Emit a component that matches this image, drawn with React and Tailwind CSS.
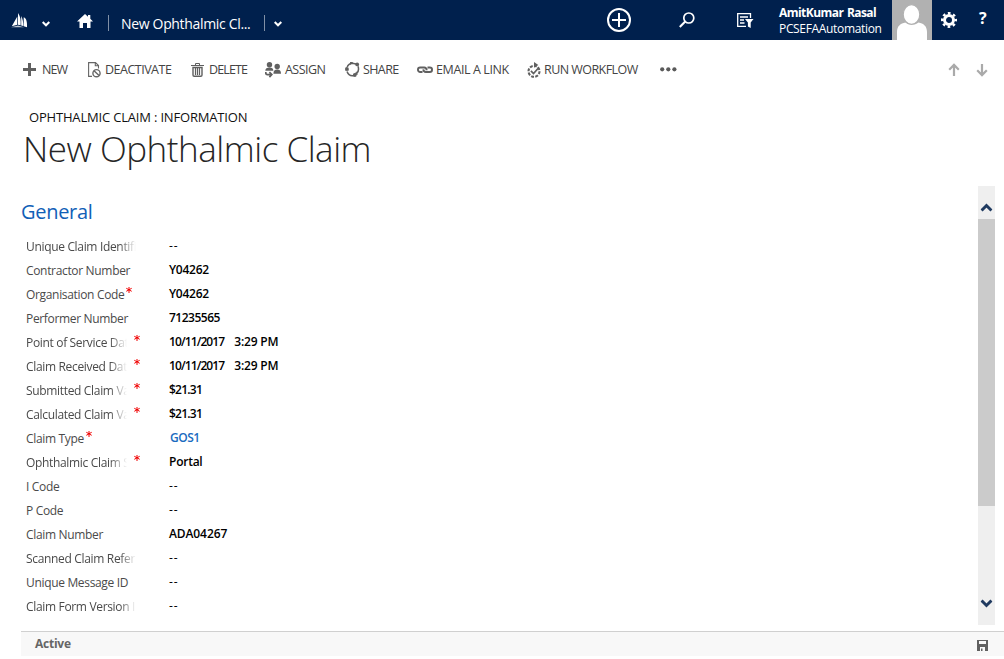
import React from "react";

const fields = [
  { label: "Unique Claim Identifi", fade: true, value: "--" },
  { label: "Contractor Number", value: "Y04262" },
  { label: "Organisation Code", required: true, value: "Y04262" },
  { label: "Performer Number", value: "71235565" },
  { label: "Point of Service Dat", fade: true, required: true, value: "10/11/2017", time: "3:29 PM" },
  { label: "Claim Received Dat", fade: true, required: true, value: "10/11/2017", time: "3:29 PM" },
  { label: "Submitted Claim Va", fade: true, required: true, value: "$21.31" },
  { label: "Calculated Claim Va", fade: true, required: true, value: "$21.31" },
  { label: "Claim Type", required: true, value: "GOS1", link: true },
  { label: "Ophthalmic Claim S", fade: true, required: true, value: "Portal" },
  { label: "I Code", value: "--" },
  { label: "P Code", value: "--" },
  { label: "Claim Number", value: "ADA04267" },
  { label: "Scanned Claim Refer", fade: true, value: "--" },
  { label: "Unique Message ID", value: "--" },
  { label: "Claim Form Version I", fade: true, value: "--" },
];

function Chevron({ className }) {
  return (
    <svg viewBox="0 0 8 6" className={className} fill="none" stroke="currentColor" strokeWidth="2">
      <path d="M0.7 1 4 4.3 7.3 1" />
    </svg>
  );
}

function Asterisk() {
  return (
    <svg viewBox="0 0 6 6" className="mt-1 h-1.5 w-1.5 shrink-0" stroke="#f00000" strokeWidth="1">
      <path d="M3 0v6M0.3 1.3l5.4 3M5.7 1.3l-5.4 3" />
    </svg>
  );
}

const icons = {
  plus: (
    <svg viewBox="0 0 13 13" className="h-[13px] w-[13px]" fill="#5f5f5f">
      <path d="M5 0h3v5h5v3H8v5H5V8H0V5h5z" />
    </svg>
  ),
  deactivate: (
    <svg viewBox="0 0 13 16" className="h-4 w-[13px]" fill="none" stroke="#666" strokeWidth="1.1">
      <path d="M4 14.4H.6V.6h6.9l3 3v3M7.3.6v3.2h3.2" />
      <circle cx="8.5" cy="11.2" r="3.6" strokeWidth="1.4" />
      <path d="m6 8.8 5 4.8" strokeWidth="1.4" />
    </svg>
  ),
  trash: (
    <svg viewBox="0 0 13 14" className="h-[14px] w-[13px]" fill="none" stroke="#5f5f5f">
      <path d="M0 2.5h13M4.5 2.5v-2h4v2" />
      <path d="M2 4.5V12q0 1.3 1.2 1.3h6.6q1.2 0 1.2-1.3V4.5z" strokeWidth="1.4" />
      <path d="M4.5 5v7M6.5 5v7M8.5 5v7" strokeWidth="1.2" />
    </svg>
  ),
  assign: (
    <svg viewBox="0 0 16 16" className="h-4 w-4" fill="#606060">
      <circle cx="4.5" cy="2.7" r="2.7" />
      <path d="M.3 8.7C.3 6.4 2 5.6 4.5 5.6s3.8.8 3.8 3.1z" />
      <circle cx="12.2" cy="4.5" r="2.7" />
      <path d="M8.4 11.7c0-3 1.3-4.3 3.8-4.3s3.8 1.2 3.8 4.3z" />
      <path d="M.8 10v1.1q0 1.5 1.5 1.5h3.2M4.4 10.2l2.4 2.4-2.4 2.5" fill="none" stroke="#606060" strokeWidth="1.7" />
    </svg>
  ),
  share: (
    <svg viewBox="0 0 15 15" className="h-[15px] w-[15px]" fill="#606060">
      <g fill="none" stroke="#606060" strokeWidth="1.5">
        <path d="M2.2 5C3 2.7 4.8 1.3 7.5 1.2L11 2" />
        <path d="M13 4.3c1 2.8.5 5.4-1.4 7.2" />
        <path d="M9 13.5C5.8 14.2 3.2 12.7 2 9.5" />
      </g>
      <path d="M5 .1h3.2L5.3 3.3zM12.8 12.7l-3.3.2 1.7-3.6zM.3 8.7l1-3.2 2.8 2.7z" />
      <circle cx="12.2" cy="2.4" r="1.9" />
      <circle cx="9.8" cy="13" r="1.9" />
      <circle cx="1.9" cy="6.9" r="1.9" />
    </svg>
  ),
  link: (
    <svg viewBox="0 0 16 8" className="h-2 w-4" fill="none" stroke="#606060" strokeWidth="1.9">
      <path d="M5.5 6H3.2a2.2 2.2 0 0 1 0-4.500h4q2.300 0 2.500 2.700M10.500 1.500h2.300a2.200 2.200 0 0 1 0 4.500H8.800Q6.500 6 6.300 3.400" />
    </svg>
  ),
  workflow: (
    <svg viewBox="0 0 14 16" className="h-4 w-[14px]" fill="none" stroke="#606060">
      <circle cx="7" cy="9.3" r="5.5" strokeWidth="2.1" strokeDasharray="2.9 1.3" />
      <path d="m3.9 8.8 2.6 2.7 5.2-5.8" strokeWidth="1.7" />
      <path d="M7 0l4.3 3L7 5.7z" fill="#606060" stroke="none" />
    </svg>
  ),
};

const commands = [
  { icon: "plus", text: "NEW", box: "w-[65px]", gap: "gap-1.5", track: "tracking-[-0.9px]" },
  { icon: "deactivate", text: "DEACTIVATE", box: "w-[103px]", gap: "gap-1", track: "tracking-[-0.5px]" },
  { icon: "trash", text: "DELETE", box: "w-[74px]", gap: "gap-[5px]", track: "tracking-[-0.85px]" },
  { icon: "assign", text: "ASSIGN", box: "w-20", gap: "gap-1", track: "tracking-[-0.55px]" },
  { icon: "share", text: "SHARE", box: "w-[72px]", gap: "gap-[3px]", track: "tracking-[-0.6px]" },
  { icon: "link", text: "EMAIL A LINK", box: "w-[110px]", gap: "gap-[3px]", track: "tracking-[-0.4px]" },
  { icon: "workflow", text: "RUN WORKFLOW", box: "w-[133px]", gap: "gap-[3px]", track: "tracking-[-0.55px]" },
];

function TopBar() {
  return (
    <header className="flex h-10 shrink-0 bg-[#00204d] text-white">
      <div className="flex w-[300px] shrink-0 items-center">
        <svg viewBox="0 0 17 15" className="ml-[11px] h-[15px] w-[17px] shrink-0 fill-white">
          <path d="M6.3 3.5V11.7L.8 13.3zM7 0C9.500 3.500 10 8 9.600 12.200L7 11.700zM10.200 3c1.500 3 2.200 6.500 2.100 10l-2.100-.6zM12.700 4.300c2.800 1 3.600 5 3.300 10L12.700 13.200z" />
          <path d="M0 14.300 7 12.600l6 1.700z" opacity="0.75" />
        </svg>
        <Chevron className="mt-2 ml-[14px] h-1.5 w-2 shrink-0" />
        <svg viewBox="0 0 16 14" className="ml-[27px] h-[14px] w-4 shrink-0 translate-y-px fill-white">
          <path d="M8 0l3 2.7V1h2.3v3.7L16 7.5h-2.5V14H10V9H6v5H2.5V7.5H0z" />
        </svg>
        <div className="mt-1.5 ml-[15px] h-4 w-px shrink-0 bg-[#8090a6]" />
        <span className="mt-2 ml-3 w-[143px] shrink-0 text-[14px] leading-5 tracking-[-0.33px] whitespace-nowrap">New Ophthalmic Cl...</span>
        <div className="mt-1.5 h-4 w-px shrink-0 bg-[#8090a6]" />
        <Chevron className="mt-2 ml-[9px] h-1.5 w-2 shrink-0" />
      </div>
      <div className="flex flex-1 items-center justify-end">
        <svg viewBox="0 0 24 24" className="h-6 w-6 fill-none stroke-white" strokeWidth="2">
          <circle cx="12" cy="12" r="11" />
          <path d="M12 5v14M5 12h14" />
        </svg>
        <svg viewBox="0 0 16 16" className="ml-12 h-4 w-4 fill-none stroke-white" strokeWidth="1.7">
          <circle cx="9.8" cy="6" r="5" />
          <path d="M6.2 9.6.8 15" strokeWidth="2.1" />
        </svg>
        <svg viewBox="0 0 17 15" className="ml-[42px] h-[15px] w-[17px] fill-none stroke-white" strokeWidth="1.3">
          <path d="M13.5 5V.7H.7v12.6H9M3 4h8M3 7h4M3 10h4.5" />
          <path d="M8 6h8.5L13.7 9.5V15l-2.8-1.5v-4z" fill="white" stroke="none" />
        </svg>
        <div className="ml-[25px] flex h-10 w-[113px] flex-col whitespace-nowrap">
          <span className="mt-[5px] text-[12px] leading-4 font-bold tracking-[-0.55px] [word-spacing:1px]">AmitKumar Rasal</span>
          <span className="text-[12px] leading-4 tracking-[-0.33px]">PCSEFAAutomation</span>
        </div>
        <svg viewBox="0 0 40 40" className="h-10 w-10 shrink-0 bg-[#b1b1b1] fill-white">
          <path d="M5 40v-8c0-6 3.5-8.5 8.5-9.5 4 3 9 3 13 0C31.5 23.5 35 26 35 32v8z" />
          <ellipse cx="19.5" cy="14.5" rx="8.3" ry="9.9" stroke="#b1b1b1" strokeWidth="1.2" />
        </svg>
        <svg viewBox="0 0 16 16" className="ml-[9px] h-4 w-4 fill-none stroke-white">
          <circle cx="8" cy="8" r="4.5" strokeWidth="3" />
          <circle cx="8" cy="8" r="6.8" strokeWidth="2.4" strokeDasharray="2.67 2.67" strokeDashoffset="1.335" />
        </svg>
        <span className="mr-[17px] ml-[22px] w-2 -translate-y-0.5 text-[16px] leading-5 font-bold">?</span>
      </div>
    </header>
  );
}

function CommandBar() {
  return (
    <nav className="flex h-[59px] shrink-0 items-center pr-4 pl-[23px] text-[12.5px] text-[#444]">
      {commands.map((c) => (
        <button key={c.text} className={`flex shrink-0 items-center whitespace-nowrap ${c.box} ${c.gap}`}>
          {icons[c.icon]}
          <span className={`leading-4 ${c.track}`}>{c.text}</span>
        </button>
      ))}
      <svg viewBox="0 0 17 5" className="h-[5px] w-[17px] fill-[#5a5a5a]">
        <circle cx="2.2" cy="2.3" r="2.1" />
        <circle cx="8.3" cy="2.3" r="2.1" />
        <circle cx="14.4" cy="2.3" r="2.1" />
      </svg>
      <div className="ml-auto flex gap-4">
        <svg viewBox="0 0 12 14" className="h-[14px] w-3 fill-none stroke-[#aaa]" strokeWidth="2.2">
          <path d="M6 1.5V13M1.2 6.7 6 1.9l4.8 4.8" />
        </svg>
        <svg viewBox="0 0 12 14" className="h-[14px] w-3 fill-none stroke-[#aaa]" strokeWidth="2.2">
          <path d="M6 1v11.5M1.2 7.3 6 12.1l4.8-4.8" />
        </svg>
      </div>
    </nav>
  );
}

function valueTracking(value) {
  if (value === "--") return "tracking-[1px]";
  if (value.includes("/")) return "tracking-[-0.9px]";
  if (value.startsWith("$")) return "tracking-[-0.75px]";
  if (value.startsWith("7")) return "tracking-[-0.5px]";
  if (value === "GOS1") return "tracking-[-0.5px]";
  if (value === "ADA04267") return "tracking-[-0.1px]";
  return "tracking-[-0.25px]";
}

function Field({ f }) {
  const fade = f.fade
    ? f.required
      ? "w-[101px] [mask-image:linear-gradient(to_right,black_84px,transparent_101px)]"
      : "w-[110px] [mask-image:linear-gradient(to_right,black_94px,transparent_110px)]"
    : "";
  return (
    <div className="flex h-6 text-[12px] leading-6 whitespace-nowrap">
      <div className={`flex w-[143px] shrink-0 ${f.fade ? "gap-[7px]" : "gap-0.5"}`}>
        <span className={`tracking-[-0.33px] text-[#4a4a4a] ${fade}`}>{f.label}</span>
        {f.required && <Asterisk />}
      </div>
      <div className={`-mt-px flex gap-2.5 ${f.value === "--" ? "font-medium" : "font-semibold"} ${f.link ? "pl-px text-[#1a6bc0]" : "text-black"}`}>
        <span className={valueTracking(f.value)}>{f.value}</span>
        {f.time && <span className="tracking-[-0.2px]">{f.time}</span>}
      </div>
    </div>
  );
}

export default function App() {
  return (
    <div className="flex h-[659px] w-[1004px] flex-col overflow-hidden bg-white font-['Open_Sans','Noto_Sans',sans-serif]">
      <TopBar />
      <CommandBar />
      <div className="h-[87px] shrink-0 pl-6">
        <p className="mt-[10px] pl-[5px] text-[13px] leading-4 tracking-[-0.18px] text-[#111]">OPHTHALMIC CLAIM : INFORMATION</p>
        <h1 className="-ml-px text-[35px] leading-[48px] font-light tracking-[-0.47px] text-[#262626]">New Ophthalmic Claim</h1>
      </div>
      <main className="flex h-[439px] shrink-0 justify-between pr-[9px] pl-[21px]">
        <div className="pt-3">
          <h2 className="text-[20px] leading-7 tracking-[-0.3px] text-[#1160b7]">General</h2>
          <div className="mt-[9px] pl-[5px]">
            {fields.map((f) => (
              <Field key={f.label} f={f} />
            ))}
          </div>
        </div>
        <div className="flex w-[17px] flex-col items-center bg-[#efefef] text-[#1f3a60]">
          <div className="flex h-[33px] items-end pb-[7px]">
            <Chevron className="h-[9px] w-3 -translate-x-[0.5px] rotate-180" />
          </div>
          <div className="h-[287px] w-full bg-[#cbcbcb]" />
          <Chevron className="mt-auto mb-[17px] h-[9px] w-3 -translate-x-[0.5px]" />
        </div>
      </main>
      <footer className="mt-[6px] ml-[21px] flex h-[25px] shrink-0 items-center justify-between border-t border-[#d0d0d0] bg-[#f8f8f8] pr-4 pl-3.5">
        <span className="text-[12px] leading-4 font-bold tracking-[-0.25px] text-[#666]">Active</span>
        <svg viewBox="0 0 11 11" className="mt-0.5 h-[11px] w-[11px]">
          <path d="M0 0h11v11H0z" fill="#606060" />
          <path d="M2 1h7v3H2zM3 7h5v4H3z" fill="#f8f8f8" />
          <path d="M4 8.5h1.5V11H4z" fill="#606060" />
        </svg>
      </footer>
    </div>
  );
}
